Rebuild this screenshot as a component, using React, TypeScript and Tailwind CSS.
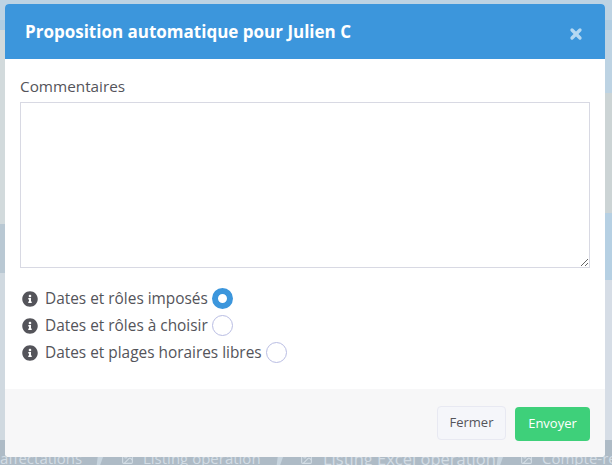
import { Image, X } from "lucide-react";

const options = [
  { label: "Dates et rôles imposés", checked: true },
  { label: "Dates et rôles à choisir", checked: false },
  { label: "Dates et plages horaires libres", checked: false },
];

function InfoIcon() {
  return (
    <svg viewBox="0 0 512 512" className="w-[16px] h-[16px] shrink-0 fill-[#54545a]">
      <path d="M256 8C119 8 8 119 8 256s111 248 248 248 248-111 248-248S393 8 256 8zm0 110c23 0 42 19 42 42s-19 42-42 42-42-19-42-42 19-42 42-42zm56 254c0 7-5 12-12 12h-88c-7 0-12-5-12-12v-24c0-7 5-12 12-12h12v-64h-12c-7 0-12-5-12-12v-24c0-7 5-12 12-12h64c7 0 12 5 12 12v100h12c7 0 12 5 12 12v24z" />
    </svg>
  );
}

function Radio({ checked }: { checked: boolean }) {
  if (checked) {
    return <span className="block w-[21px] h-[21px] shrink-0 rounded-full bg-white border-[6px] border-[#3c96dc]" />;
  }
  return <span className="block w-[21px] h-[21px] shrink-0 rounded-full bg-white border border-[#b9bde3]" />;
}

function TabSeparator() {
  return (
    <svg viewBox="0 0 11 25" className="w-[11px] h-[25px] shrink-0">
      <polygon points="0,25 3,0 11,0 2,25" fill="#c8d5df" />
    </svg>
  );
}

export default function App() {
  return (
    <div className="relative w-[612px] h-[465px] overflow-hidden flex flex-col bg-[#bdd3e3] font-['Open_Sans',sans-serif]">
      {/* blurred page behind the modal */}
      <div className="h-[20px] shrink-0" />
      <div className="h-[10px] shrink-0 bg-[#b0cde2]" />
      <div className="flex-1 flex">
        <div className="flex-1 flex flex-col">
          <div className="h-[194px] bg-[#d2dadc]" />
          <div className="h-[49px] bg-[#b9c8d3]" />
          <div className="flex-1 bg-[#d0d9e0]" />
        </div>
        <div className="flex-1 flex flex-col">
          <div className="h-[63px] bg-[#bdd3e3]" />
          <div className="h-[120px] bg-[#ccd4d5]" />
          <div className="h-[67px] bg-[#b6d0e3]" />
          <div className="flex-1 bg-[#d6dde6]" />
        </div>
      </div>
      <div className="h-[25px] shrink-0 bg-[#aebbc6] flex overflow-hidden whitespace-nowrap text-[#d3dde5] text-[15px] leading-[25px] pt-[6px]">
        <span className="w-[96px] shrink-0 text-right pr-[16px]">affectations</span>
        <TabSeparator />
        <span className="w-[169px] shrink-0 flex items-start pl-[14px]">
          <Image size={13} className="mt-[6px] mr-[9px] shrink-0" />
          Listing operation
        </span>
        <TabSeparator />
        <span className="w-[209px] shrink-0 flex items-start pl-[13px] text-[16.5px]">
          <Image size={13} className="mt-[6px] mr-[10px] shrink-0" />
          Listing Excel operation
        </span>
        <TabSeparator />
        <span className="shrink-0 flex items-start pl-[13px]">
          <Image size={13} className="mt-[6px] mr-[9px] shrink-0" />
          Compte-rendu
        </span>
      </div>

      {/* modal */}
      <div className="absolute left-[5px] top-[4px] w-[600px] h-[453px] rounded-[4px] bg-white overflow-hidden flex flex-col">
        <div className="h-[55px] shrink-0 bg-[#3c96dc] flex items-center justify-between pl-[20px] pr-[21px]">
          <h1 className="text-[17px] font-bold text-white">Proposition automatique pour Julien C</h1>
          <X size={16} strokeWidth={5} className="text-[#b5d8f2] mt-[5px]" />
        </div>

        <div className="flex-1 px-[15px] pt-[17px]">
          <label className="block text-[15.3px] font-medium leading-[20px] text-[#54545a] mb-[6px]">Commentaires</label>
          <textarea className="block w-full h-[166px] border border-[#d8d9e3] bg-white" />
          <div className="mt-[20px] flex flex-col gap-[6px]">
            {options.map((o) => (
              <div key={o.label} className="flex items-center h-[21px] pl-[2px]">
                <InfoIcon />
                <span className="ml-[7px] mr-[4px] text-[15.4px] font-medium text-[#54545a]">{o.label}</span>
                <Radio checked={o.checked} />
              </div>
            ))}
          </div>
        </div>

        <div className="h-[68px] shrink-0 bg-[#f7f7f8] flex items-center justify-end gap-[9px] px-[15px]">
          <button className="w-[69px] h-[34px] rounded-[4px] border border-[#e8e9f2] bg-[#f5f6fa] text-[13px] text-[#54545a]">
            Fermer
          </button>
          <button className="w-[75px] h-[34px] mt-[2px] rounded-[4px] bg-[#3ed07a] text-[13px] font-medium text-white">
            Envoyer
          </button>
        </div>
      </div>
    </div>
  );
}
